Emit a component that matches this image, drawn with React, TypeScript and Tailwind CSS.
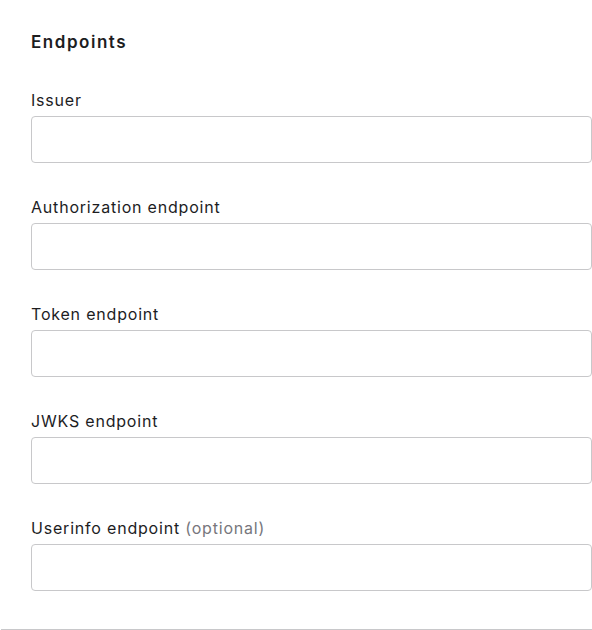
const FIELDS: { label: string; optional?: boolean }[] = [
  { label: "Issuer" },
  { label: "Authorization endpoint" },
  { label: "Token endpoint" },
  { label: "JWKS endpoint" },
  { label: "Userinfo endpoint", optional: true },
];

export default function App() {
  return (
    <div className="w-[592px] h-[630px] bg-white font-['Inter',sans-serif] text-[#1d1d1f]">
      <div className="ml-[1px] h-[630px] border-b border-[#c8c8ca] pl-[30px] pt-[30px]">
        <h2 className="text-[17px] leading-6 font-semibold tracking-[0.09em]">Endpoints</h2>
        <div className="mt-[34px] flex flex-col gap-[32px]">
          {FIELDS.map((f) => (
            <div key={f.label} className="flex flex-col">
              <label className="text-[16px] leading-6 mb-[4px] tracking-[0.05em]">
                {f.label}
                {f.optional && <span className="text-[#77777c]"> (optional)</span>}
              </label>
              <input
                type="text"
                className="h-[47px] w-[561px] rounded-[4px] border border-[#c8c8ca] bg-white px-3 outline-none"
              />
            </div>
          ))}
        </div>
      </div>
    </div>
  );
}
